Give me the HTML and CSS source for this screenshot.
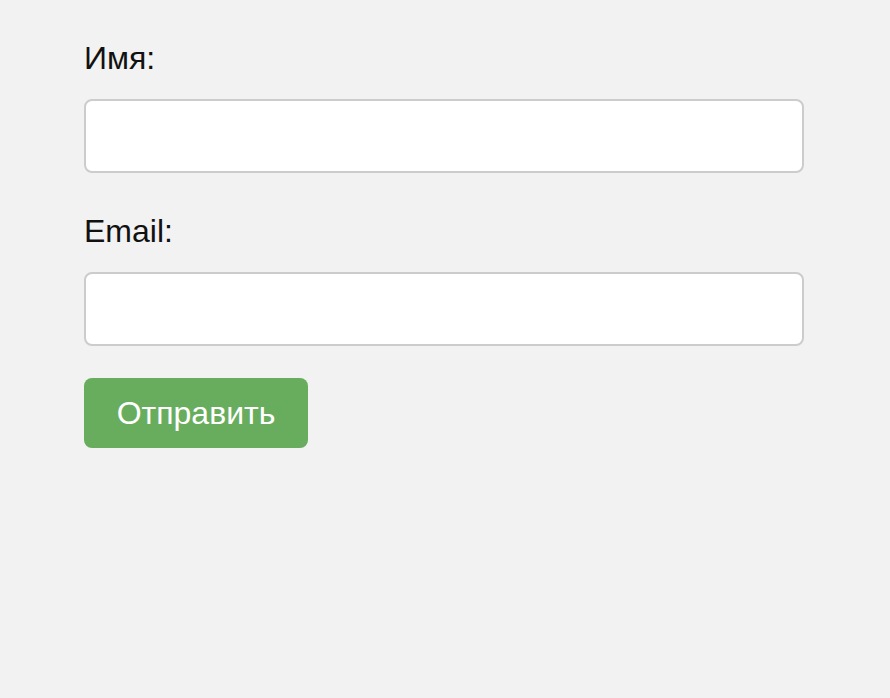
FILE: index.html
```html
<!DOCTYPE html>
<html lang="ru">
<head>
    <meta charset="UTF-8">
    <meta name="viewport" content="width=device-width, initial-scale=1.0">
    <title>Форма</title>
    <link rel="stylesheet" href="styles.css">
</head>
<body>
    <form class="form">
        <div class="form-group">
            <label for="name">Имя:</label>
            <input type="text" id="name">
        </div>
        <div class="form-group">
            <label for="email">Email:</label>
            <input type="email" id="email">
        </div>
        <button type="button">Отправить</button>
    </form>
</body>
</html>
```

FILE: styles.css
```css
/* Basic form layout */
body {
    font-family: "Liberation Sans", Arial, sans-serif;
    margin: 0;
    background-color: #f2f2f2;
    color: #111;
}
.form {
    width: 720px;
    padding: 40px 0 0 84px;
}
.form-group {
    margin-bottom: 40px;
}
.form-group:last-of-type {
    margin-bottom: 32px;
}
label {
    display: block;
    font-size: 32px;
    line-height: 36px;
    margin-bottom: 23px;
}
input[type="text"], input[type="email"] {
    display: block;
    width: 100%;
    height: 74px;
    padding: 10px 16px;
    border: 2px solid #ccc;
    border-radius: 8px;
    background: #fff;
    font-size: 28px;
    box-sizing: border-box;
    margin: 0;
}
button {
    display: block;
    width: 224px;
    padding: 16px 0;
    background-color: #68ad5e;
    color: white;
    border: none;
    border-radius: 8px;
    font-family: inherit;
    font-size: 32px;
    line-height: 38px;
    cursor: pointer;
}
button:hover {
    background-color: #5a9a51;
}
```
